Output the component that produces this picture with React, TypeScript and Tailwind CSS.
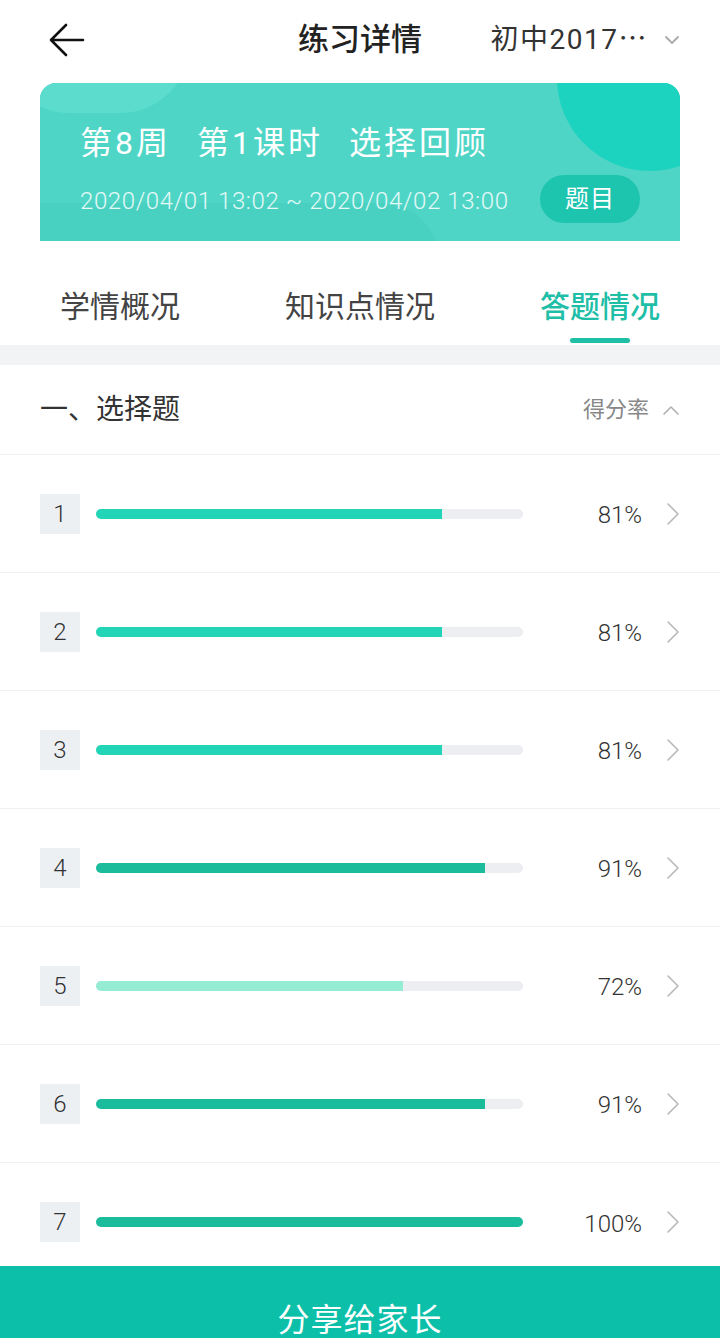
import React from "react";

const rows = [
  { n: 1, pct: 81, color: "bg-[#22d5b6]" },
  { n: 2, pct: 81, color: "bg-[#22d5b6]" },
  { n: 3, pct: 81, color: "bg-[#22d5b6]" },
  { n: 4, pct: 91, color: "bg-[#1abc9c]" },
  { n: 5, pct: 72, color: "bg-[#94ecd2]" },
  { n: 6, pct: 91, color: "bg-[#1abc9c]" },
  { n: 7, pct: 100, color: "bg-[#1abc9c]" },
];

function ChevronRight() {
  return (
    <svg width="14" height="24" viewBox="0 0 14 24" fill="none">
      <path d="M2 2 L12 12 L2 22" stroke="#b8b8b8" strokeWidth="1.6" strokeLinecap="round" strokeLinejoin="round" />
    </svg>
  );
}

function Row({ n, pct, color, last }: { n: number; pct: number; color: string; last?: boolean }) {
  return (
    <div className={`flex items-center px-[40px] h-[118px] ${last ? "" : "border-b border-[#f1f2f3]"}`}>
      <div className="w-[40px] h-[40px] bg-[#edf0f3] flex items-center justify-center text-[24px] text-[#333] font-light">
        {n}
      </div>
      <div className="ml-[16px] w-[427px] h-[10px] rounded-full bg-[#eceef1] overflow-hidden">
        <div className={`h-full ${color}`} style={{ width: `${pct}%` }} />
      </div>
      <div className="flex-1 text-right text-[24px] text-[#333] font-light pt-[3px]">{pct}%</div>
      <div className="w-[38px] flex justify-end">
        <ChevronRight />
      </div>
    </div>
  );
}

export default function App() {
  return (
    <div
      className="relative w-[720px] h-[1338px] overflow-hidden bg-white"
      style={{ fontFamily: 'Roboto, "Noto Sans CJK SC", sans-serif' }}
    >
      {/* Header */}
      <div className="grid grid-cols-[1fr_auto_1fr] items-center h-[80px] px-[40px]">
        <div className="pl-[8px]">
          <svg width="38" height="36" viewBox="0 0 38 36" fill="none">
            <path d="M3 18 H35 M18 3 L3 18 L18 33" stroke="#111" strokeWidth="2.6" strokeLinecap="round" strokeLinejoin="round" />
          </svg>
        </div>
        <div className="text-[31px] font-medium text-[#222]">练习详情</div>
        <div className="flex items-center justify-end">
          <span className="text-[28px] text-[#333] tracking-[1.5px]">初中2017⋯</span>
          <svg className="ml-[16px]" width="16" height="10" viewBox="0 0 16 10" fill="none">
            <path d="M2 2 L8 8 L14 2" stroke="#aaa" strokeWidth="1.8" strokeLinecap="round" strokeLinejoin="round" />
          </svg>
        </div>
      </div>

      {/* Banner */}
      <div className="mx-[40px] mt-[3px] relative h-[158px] rounded-t-[16px] overflow-hidden bg-[#4fd5c6]">
        <div className="absolute left-[517px] top-[-98px] w-[186px] h-[186px] rounded-full bg-[#1cd3bf]" />
        <div className="absolute left-[-40px] top-[-110px] w-[190px] h-[140px] rounded-full bg-[#5cdccd]" />
        <div className="absolute left-[-60px] top-[120px] w-[460px] h-[120px] rounded-full bg-[#48d0c1]" />
        <div className="relative pl-[40px] pr-[40px] pt-[38px]">
          <div className="flex gap-[26px] text-[32px] text-white leading-[44px] tracking-[3px]">
            <span>第8周</span>
            <span>第1课时</span>
            <span>选择回顾</span>
          </div>
          <div className="flex items-center justify-between mt-[10px]">
            <span className="text-[24px] text-white/85 font-light tracking-[0.6px] pt-[3px]">2020/04/01 13:02 ~ 2020/04/02 13:00</span>
            <div className="w-[100px] h-[48px] rounded-full bg-[#1dc4ae] flex items-center justify-center text-[24px] text-white tracking-[1px]">
              题目
            </div>
          </div>
        </div>
      </div>

      {/* Tabs */}
      <div className="grid grid-cols-3 h-[104px]">
        <div className="flex justify-center pt-[46px] text-[30px] leading-[40px] text-[#444]">学情概况</div>
        <div className="flex justify-center pt-[46px] text-[30px] leading-[40px] text-[#444]">知识点情况</div>
        <div className="relative flex justify-center pt-[46px] text-[30px] leading-[40px] font-medium text-[#1fbea7]">
          答题情况
          <div className="absolute bottom-[2px] left-1/2 -translate-x-1/2 w-[60px] h-[5px] rounded-full bg-[#1fbea7]" />
        </div>
      </div>

      <div className="h-[20px] bg-[#f2f3f5]" />

      {/* Section header */}
      <div className="flex items-center justify-between h-[90px] px-[40px] border-b border-[#f1f2f3]">
        <span className="text-[28px] text-[#333]">一、选择题</span>
        <div className="flex items-center">
          <span className="text-[22px] text-[#888]">得分率</span>
          <svg className="ml-[13px]" width="18" height="10" viewBox="0 0 18 10" fill="none">
            <path d="M2 9 L9 2 L16 9" stroke="#b0b0b0" strokeWidth="1.6" strokeLinecap="round" strokeLinejoin="round" />
          </svg>
        </div>
      </div>

      {rows.map((r, i) => (
        <Row key={r.n} {...r} last={i === rows.length - 1} />
      ))}

      {/* Footer button */}
      <div className="absolute left-0 right-0 top-[1266px] h-[108px] bg-[#0bbfa9] flex items-center justify-center text-[32px] text-white tracking-[1px]">
        分享给家长
      </div>
    </div>
  );
}
